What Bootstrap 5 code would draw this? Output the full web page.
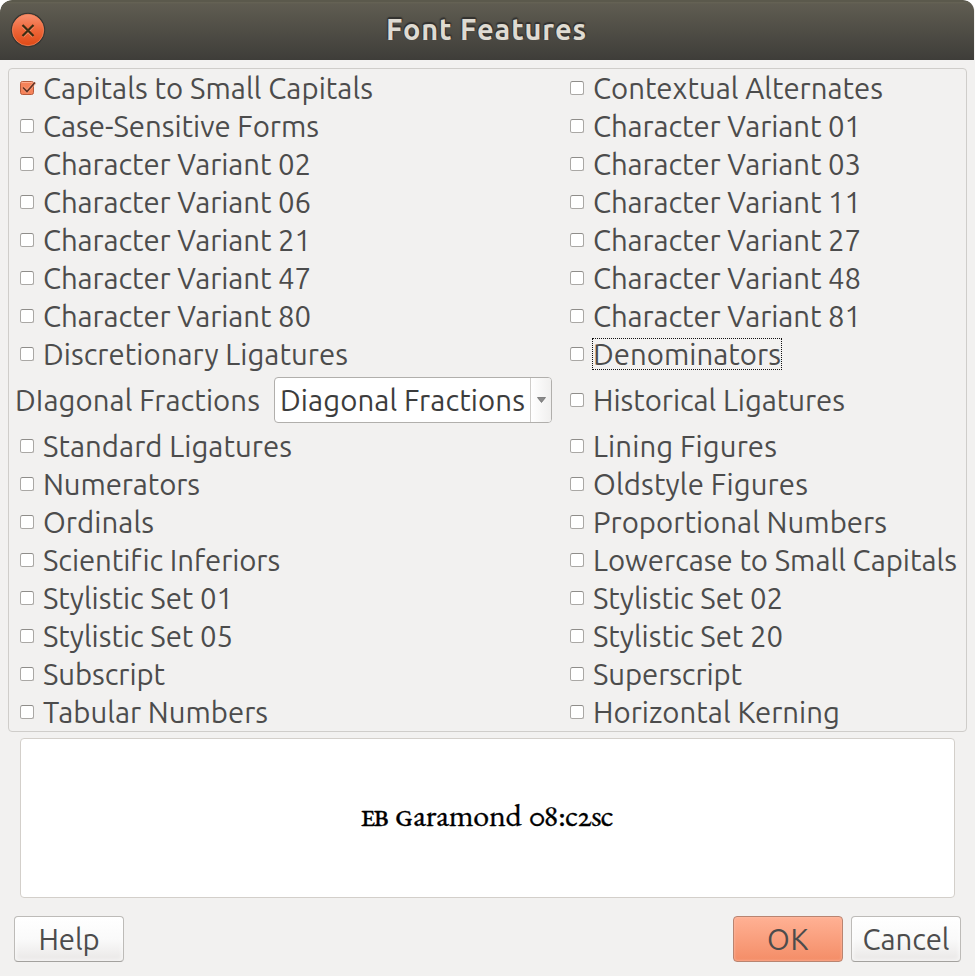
<!DOCTYPE html>
<html lang="en">
<head>
<meta charset="utf-8">
<meta name="viewport" content="width=device-width, initial-scale=1">
<title>Font Features</title>
<link href="https://cdn.jsdelivr.net/npm/bootstrap@5.3.0/dist/css/bootstrap.min.css" rel="stylesheet">
<style>
  html, body { height: 976px; overflow: hidden; }
  body { background: #fff; color: #4c4c4c; font-family: Ubuntu, "Noto Sans", sans-serif; font-size: 29.33px; }
  .window { width: 975px; height: 976px; background: #f2f1f0; border-radius: 12px 12px 0 0; overflow: hidden; }
  .titlebar { height: 60px; flex: none; width: 974px; border-radius: 12px 11px 0 0; padding-left: 10px;
    background: linear-gradient(#5b594c 0, #5b594c 2px, #666355 2px, #5f5c51 4px, #3e3d39 100%); }
  .title-text { color: #dfdbd2; font-weight: 700; font-size: 29px; line-height: 60px; padding: 0 0 2px 340px;
    text-shadow: -1px -1px 1px #333230, 1px -1px 1px #333230, 0 -2px 1px #333230; }
  .title-text .fit { line-height: 38px; }
  .close-dot { width: 36px; height: 36px; }
  .features { margin: 8px 8px 0; height: 664px; width: 959px; border: 1px solid #cfcdca; border-radius: 4px; }
  .column-left { width: 550px; padding-left: 11px; }
  .column-right { padding-left: 11px; }
  .feature { height: 38px; white-space: nowrap; }
  .feature.tall { height: 54px; }
  .feature.with-combo { margin-left: -5px; margin-right: 7px; }
  .tick { appearance: none; width: 14px; height: 14px; margin: 0; flex: none; background: #fff;
    border: 1px solid #aaa8a5; border-top-color: #8f8d8a; border-radius: 2.5px; }
  .tick-wrap { width: 23px; flex: none; height: 14px; }
  .fit { line-height: 40px; height: 38px; display: inline-block; }
  .focused { outline: 1px dotted #111; outline-offset: 0; line-height: 32px; height: 30px; }
  .combo { width: 278px; height: 46px; background: #fff; border: 1px solid #b1afac; border-radius: 4px; color: #3c3c3c; }
  .combo-label { width: 256px; padding-left: 5px; border-right: 1px solid #cfcdca; }
  .combo-arrow { background: linear-gradient(90deg, #fff, #f0efee); border-radius: 0 3px 3px 0; }
  .preview { margin: 6px 20px 0; height: 160px; width: 935px; background: #fff; border: 1px solid #d3cfca;
    border-radius: 4px; color: #000; font-family: "EB Garamond", "Liberation Serif", serif; font-size: 32px;
    font-variant-numeric: oldstyle-nums; padding: 0 2px 7px 0; -webkit-text-stroke: .35px #000; }
  .preview .fit { line-height: 38px; }
  .small-cap { font-variant-caps: all-small-caps; }
  .buttons { padding: 18px 14px 0; }
  .dialog-btn { --bs-btn-color: #4c4c4c; width: 110px; height: 46px; padding: 1px 0 0; font-size: 29.33px; line-height: 42px;
    border: 1px solid #bdbbb8; border-bottom-color: #a3a19e; border-radius: 4px; white-space: nowrap;
    background: linear-gradient(#fff, #fafafa 50%, #e9e7e6); box-shadow: inset 0 0 4px 1px #ffffffb0; }
  .dialog-btn.primary { background: linear-gradient(#ffb194, #f48d67); border-color: #b98470; box-shadow: inset 0 0 2px 1px #ffc0a880; }
</style>
<script src="https://cdn.jsdelivr.net/npm/bootstrap@5.3.0/dist/js/bootstrap.bundle.min.js"></script>
</head>
<body>
<div class="window d-flex flex-column">
  <header class="titlebar d-flex align-items-center">
    <svg class="close-dot" viewBox="0 0 36 36" role="img" aria-label="Close">
      <defs><linearGradient id="dot" x1="0" y1="0" x2="0" y2="1"><stop offset="0" stop-color="#f8906f"/><stop offset=".5" stop-color="#ee6639"/><stop offset="1" stop-color="#df4a16"/></linearGradient></defs>
      <circle cx="18" cy="18" r="17.2" fill="#383632"/>
      <circle cx="18" cy="18" r="15.7" fill="url(#dot)" stroke="#f58358" stroke-width=".8"/>
      <path d="M13 14l10 10M23 14l-10 10" transform="translate(0 .7)" stroke="#f9a080" stroke-width="2.2" opacity=".7"/>
      <path d="M12.5 13l11 11M23.5 13l-11 11" stroke="#3b2d12" stroke-width="2.2"/>
    </svg>
    <span class="title-text"><span class="fit" data-w="201">Font Features</span></span>
  </header>

  <main class="features d-flex">
    <div class="column-left" id="left"></div>
    <div class="column-right" id="right"></div>
  </main>

  <section class="preview d-flex align-items-center justify-content-center">
    <div class="text-nowrap preview-line"><span class="fit" data-w="26"><span class="small-cap">EB</span></span><span class="fit ms-2" data-w="127"><span class="small-cap">G</span>aramond</span><span class="fit ms-2" data-w="83">08:c2sc</span></div>
  </section>

  <footer class="buttons d-flex">
    <button class="btn dialog-btn" type="button"><span class="fit" data-w="61">Help</span></button>
    <button class="btn dialog-btn primary ms-auto me-2" type="button"><span class="fit" data-w="42">OK</span></button>
    <button class="btn dialog-btn" type="button"><span class="fit" data-w="87">Cancel</span></button>
  </footer>
</div>
<script>
  // Each entry: feature name, label width in pixels, optional state
  const left = [["Capitals to Small Capitals",330,"checked"],["Case-Sensitive Forms",276],["Character Variant 02",268],["Character Variant 06",268],["Character Variant 21",268],["Character Variant 47",268],["Character Variant 80",268],["Discretionary Ligatures",305],["DIagonal Fractions",245,"combo"],["Standard Ligatures",249],["Numerators",157],["Ordinals",111],["Scientific Inferiors",236],["Stylistic Set 01",190],["Stylistic Set 05",190],["Subscript",122],["Tabular Numbers",225]];
  const right = [["Contextual Alternates",290],["Character Variant 01",268],["Character Variant 03",268],["Character Variant 11",268],["Character Variant 27",268],["Character Variant 48",268],["Character Variant 81",268],["Denominators",188,"focused"],["Historical Ligatures",252,"tall"],["Lining Figures",184],["Oldstyle Figures",215],["Proportional Numbers",294],["Lowercase to Small Capitals",364],["Stylistic Set 02",190],["Stylistic Set 20",190],["Superscript",149],["Horizontal Kerning",247]];
  const checkedMark = '<svg class="d-block" width="18" height="18" viewBox="0 3 18 18" overflow="visible"><rect x=".5" y="3.5" width="13" height="13" rx="2" fill="#f58259" stroke="#b65a3b"/><path d="M1.5 4.5h11" stroke="#ffab8c"/><path d="M3 9.5l4 4L15 4.5" fill="none" stroke="#ffab8c" stroke-width="3.4" opacity=".5"/><path d="M3 9.5l4 4L15 4.5" fill="none" stroke="#623323" stroke-width="1.7"/></svg>';
  function row([name, w, state]) {
    if (state === "combo")
      return `<div class="feature tall with-combo d-flex align-items-center"><span class="fit" data-w="${w}">${name}</span>
        <div class="combo d-flex ms-auto"><div class="combo-label d-flex align-items-center"><span class="fit" data-w="245">Diagonal Fractions</span></div>
        <div class="combo-arrow flex-fill d-flex align-items-center justify-content-center"><svg width="9" height="6" viewBox="0 0 9 6"><path d="M.5 .5h8L4.5 5.5z" fill="#8a8a8a" stroke="#666" stroke-width=".7"/></svg></div></div></div>`;
    const box = state === "checked" ? checkedMark : '<input class="tick d-block" type="checkbox" aria-label="' + name + '">';
    return `<div class="feature d-flex align-items-center ${state === "tall" ? "tall" : ""}"><div class="tick-wrap">${box}</div><span class="fit ${state === "focused" ? "focused" : ""}" data-w="${w}">${name}</span></div>`;
  }
  document.getElementById("left").innerHTML = left.map(row).join("");
  document.getElementById("right").innerHTML = right.map(row).join("");
  // Spread letters so that each label takes its listed width
  document.querySelectorAll(".fit").forEach(el => {
    const n = el.textContent.length, w = el.getBoundingClientRect().width;
    el.style.letterSpacing = ((+el.dataset.w - w) / n) + "px";
  });
</script>
</body>
</html>
